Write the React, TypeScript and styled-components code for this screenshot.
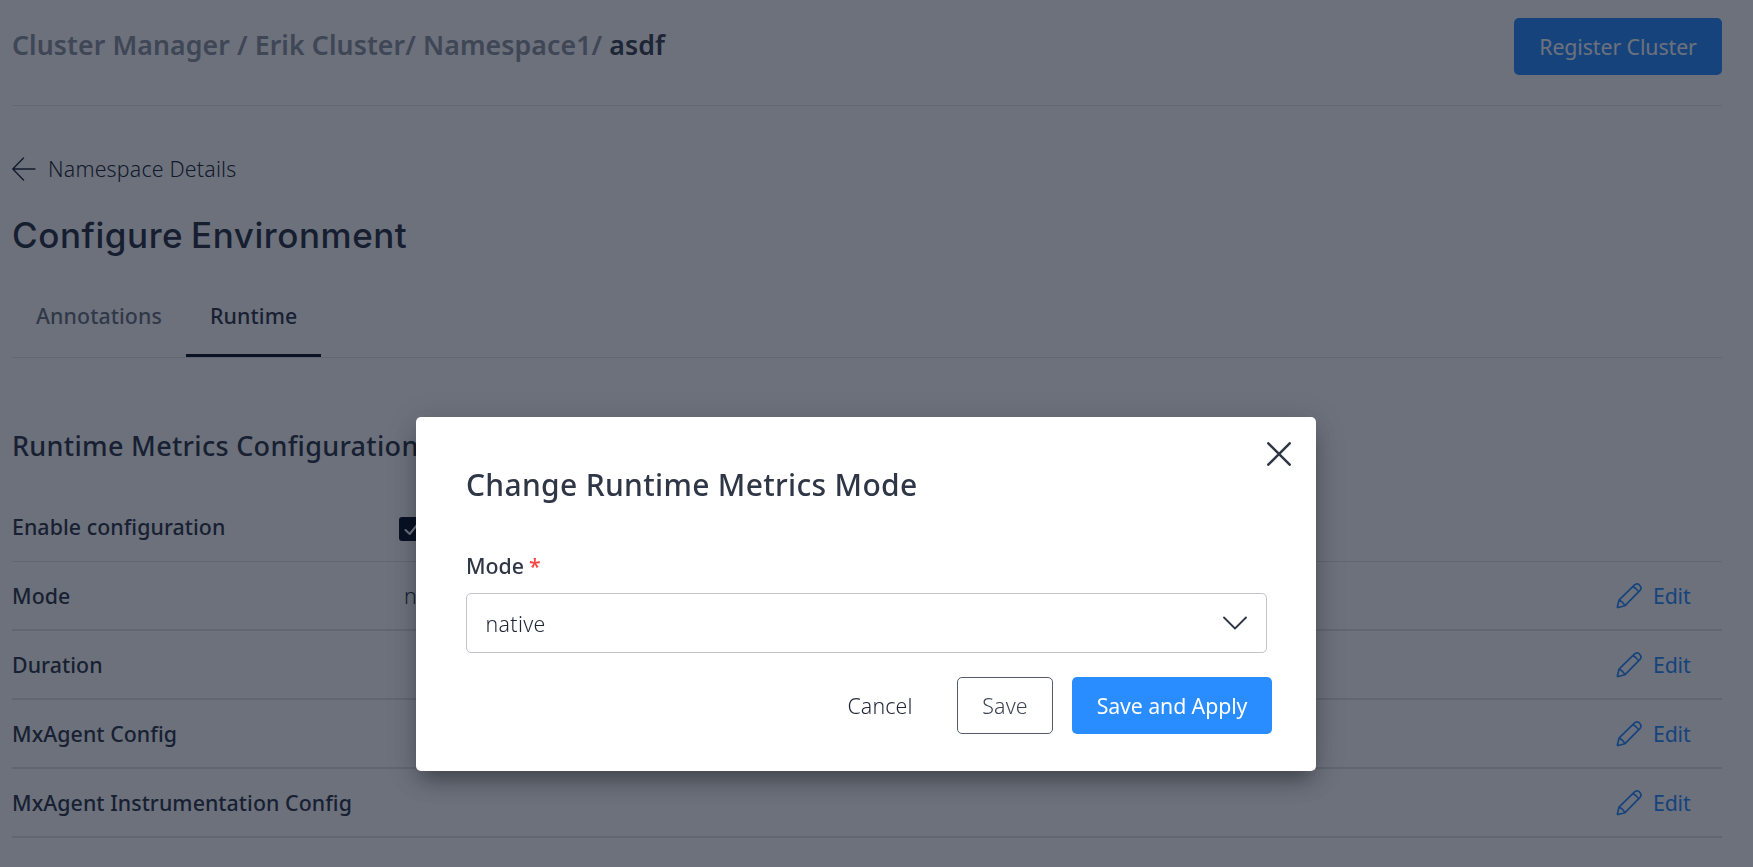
import React from "react";
import styled, { createGlobalStyle } from "styled-components";

const GlobalStyle = createGlobalStyle`
  *, *::before, *::after { box-sizing: border-box; }
  html, body { margin: 0; padding: 0; }
  body {
    background: #fff;
    color: #2f3646;
    font-family: "Noto Sans", "Open Sans", sans-serif;
    font-size: 21.33px;
    overflow: hidden;
  }
  button { font: inherit; cursor: pointer; }
  h1, h2, p { margin: 0; }
`;

const Page = styled.div`
  height: 867px;
  padding: 0 31px 0 12px;
  overflow: hidden;
`;

const Header = styled.header`
  display: flex;
  justify-content: space-between;
  align-items: flex-start;
  height: 106px;
  padding-top: 18px;
  border-bottom: 1px solid #e7e7e9;
`;

const Breadcrumb = styled.nav`
  display: flex;
  height: 57px;
  line-height: 54px;
  font-size: 26.67px;
  font-weight: 600;
  letter-spacing: 0.1px;
  color: #8f949d;
  white-space: pre;
`;

const Crumb = styled.span<{ $current?: boolean }>`
  color: ${(p) => (p.$current ? "#3a4252" : "inherit")};
`;

const Button = styled.button<{ $kind: "primary" | "outline" | "plain"; $width: number }>`
  width: ${(p) => p.$width}px;
  height: 57px;
  padding: 0;
  border: ${(p) => (p.$kind === "outline" ? "1px solid #555b69" : "none")};
  border-radius: 5px;
  background: ${(p) => (p.$kind === "primary" ? "#298cff" : "transparent")};
  color: ${(p) => (p.$kind === "primary" ? "#fff" : p.$kind === "outline" ? "#3c4352" : "#1f2636")};
  font-weight: ${(p) => (p.$kind === "primary" ? 400 : 300)};
  letter-spacing: ${(p) => (p.$kind === "primary" ? -0.1 : 0.15)}px;
  line-height: ${(p) => (p.$kind === "outline" ? 55 : 57)}px;
  white-space: nowrap;
`;

const BackLink = styled.a`
  display: flex;
  align-items: center;
  gap: 12px;
  height: 30px;
  margin-top: 48px;
  font-weight: 300;
  letter-spacing: 0.2px;
  color: #1f2636;
  line-height: 30px;
`;

const PageTitle = styled.h1`
  height: 50px;
  margin-top: 26px;
  font-family: Inter, sans-serif;
  font-size: 35px;
  font-weight: 500;
  letter-spacing: 0.55px;
  word-spacing: -2px;
  line-height: 50px;
  color: #2a3141;
`;

const Tabs = styled.div`
  display: flex;
  height: 74px;
  margin-top: 24px;
  border-bottom: 1px solid #e7e7e9;
`;

const Tab = styled.div<{ $active?: boolean; $width: number }>`
  width: ${(p) => p.$width}px;
  padding-left: 24px;
  border-bottom: 3px solid ${(p) => (p.$active ? "#0a1325" : "transparent")};
  color: ${(p) => (p.$active ? "#2f3646" : "#6c717e")};
  font-weight: 500;
  letter-spacing: 0.1px;
  line-height: 63px;
`;

const SectionTitle = styled.h2`
  height: 40px;
  margin-top: 68px;
  font-size: 27px;
  font-weight: 500;
  letter-spacing: 0.3px;
  line-height: 40px;
`;

const Row = styled.div<{ $first?: boolean }>`
  display: flex;
  align-items: ${(p) => (p.$first ? "flex-start" : "center")};
  height: ${(p) => (p.$first ? 96 : 69)}px;
  padding-top: ${(p) => (p.$first ? 46 : 0)}px;
  border-bottom: ${(p) => (p.$first ? 1 : 2)}px solid #e2e3e6;
`;

const RowLabel = styled.div`
  width: 387px;
  font-weight: 500;
  letter-spacing: 0.06px;
  line-height: 30px;
`;

const RowValue = styled.div`
  flex: 1;
  padding-left: 5px;
  font-weight: 300;
  letter-spacing: 0.2px;
  line-height: 30px;
`;

const CheckBox = styled.span`
  display: flex;
  width: 24px;
  height: 24px;
  margin-top: 5px;
  border-radius: 3px;
  background: #0a1325;
`;

const EditLink = styled.a`
  display: flex;
  align-items: center;
  gap: 11px;
  width: 106px;
  line-height: 30px;
  letter-spacing: -0.2px;
  color: #298cff;
`;

const Overlay = styled.div`
  position: fixed;
  inset: 0;
  padding: 417px 0 0 416px;
  background: rgba(10, 19, 37, 0.6);
`;

const Dialog = styled.section`
  width: 900px;
  height: 354px;
  padding: 25px 25px 0 50px;
  border-radius: 5px;
  background: #fff;
  box-shadow: 0 12px 22px -4px rgba(0, 0, 0, 0.36), 0 4px 34px rgba(0, 0, 0, 0.12);
`;

const CloseRow = styled.div`
  display: flex;
  justify-content: flex-end;
  height: 24px;
`;

const DialogTitle = styled.h2`
  height: 40px;
  margin-top: -1px;
  font-size: 30px;
  font-weight: 500;
  letter-spacing: 0.32px;
  line-height: 40px;
`;

const FieldLabel = styled.div`
  height: 30px;
  margin-top: 46px;
  font-weight: 500;
  line-height: 30px;
`;

const Required = styled.span`
  margin-left: 5px;
  color: #ff4242;
`;

const SelectBox = styled.div`
  display: flex;
  align-items: center;
  justify-content: space-between;
  width: 801px;
  height: 60px;
  margin-top: 12px;
  padding: 0 19px 0 18.5px;
  border: 1px solid #c3c4ca;
  border-radius: 5px;
  font-weight: 300;
  letter-spacing: 0.35px;
  color: #1f2636;
`;

const Actions = styled.div`
  display: flex;
  justify-content: flex-end;
  gap: 19px;
  margin: 24px 19px 0 0;
`;

const ArrowLeft = () => (
  <svg width="24" height="24" viewBox="0 0 24 24" fill="none" stroke="currentColor" strokeWidth="1.4" strokeLinecap="round" strokeLinejoin="round">
    <path d="M23 12H0.8M11.5 1L0.8 12l10.7 11" />
  </svg>
);

const Pencil = () => (
  <svg width="26" height="26" viewBox="0 0 26 26" fill="none" stroke="currentColor" strokeWidth="1.7" strokeLinejoin="round">
    <path d="M1.2 24.8L3 17.2 18.3 2.2C20.2 .3 22.4 .7 23.7 2.3 25.2 3.8 25.5 5.9 23.8 7.7L8.8 22.8 1.2 24.8M3 17.2c3 1.2 4.9 3 5.8 5.6M17 3.4c2.5 1.4 4.3 3.2 5.6 5.5" />
  </svg>
);

const Close = () => (
  <svg width="24" height="24" viewBox="0 0 24 24" fill="none" stroke="#2f3646" strokeWidth="2.5" strokeLinecap="round">
    <path d="M1.3 1.3L22.7 22.7M22.7 1.3L1.3 22.7" />
  </svg>
);

const ChevronDown = () => (
  <svg width="24" height="14" viewBox="0 0 24 14" fill="none" stroke="#2f3646" strokeWidth="1.8" strokeLinecap="round" strokeLinejoin="round">
    <path d="M1 1.5L12 12.5 23 1.5" />
  </svg>
);

const Check = () => (
  <svg width="24" height="24" viewBox="0 0 24 24" fill="none" stroke="#fff" strokeWidth="2" strokeLinecap="round" strokeLinejoin="round">
    <path d="M6.5 13l4.2 4L18 8" />
  </svg>
);

const settings = [
  { label: "Mode", value: "native" },
  { label: "Duration", value: "" },
  { label: "MxAgent Config", value: "" },
  { label: "MxAgent Instrumentation Config", value: "" },
];

export default function App() {
  return (
    <>
      <GlobalStyle />
      <Page>
        <Header>
          <Breadcrumb>
            <Crumb>{"Cluster Manager / "}</Crumb>
            <Crumb>{"Erik Cluster/ "}</Crumb>
            <Crumb>{"Namespace1/ "}</Crumb>
            <Crumb $current>asdf</Crumb>
          </Breadcrumb>
          <Button $kind="primary" $width={208}>Register Cluster</Button>
        </Header>
        <BackLink><ArrowLeft />Namespace Details</BackLink>
        <PageTitle>Configure Environment</PageTitle>
        <Tabs>
          <Tab $width={174}>Annotations</Tab>
          <Tab $width={135} $active>Runtime</Tab>
        </Tabs>
        <SectionTitle>Runtime Metrics Configuration</SectionTitle>
        <Row $first>
          <RowLabel>Enable configuration</RowLabel>
          <CheckBox><Check /></CheckBox>
        </Row>
        {settings.map((s) => (
          <Row key={s.label}>
            <RowLabel>{s.label}</RowLabel>
            <RowValue>{s.value}</RowValue>
            <EditLink><Pencil />Edit</EditLink>
          </Row>
        ))}
      </Page>
      <Overlay>
        <Dialog role="dialog" aria-modal="true">
          <CloseRow><Close /></CloseRow>
          <DialogTitle>Change Runtime Metrics Mode</DialogTitle>
          <FieldLabel>Mode<Required>*</Required></FieldLabel>
          <SelectBox>native<ChevronDown /></SelectBox>
          <Actions>
            <Button $kind="plain" $width={116}>Cancel</Button>
            <Button $kind="outline" $width={96}>Save</Button>
            <Button $kind="primary" $width={200}>Save and Apply</Button>
          </Actions>
        </Dialog>
      </Overlay>
    </>
  );
}
